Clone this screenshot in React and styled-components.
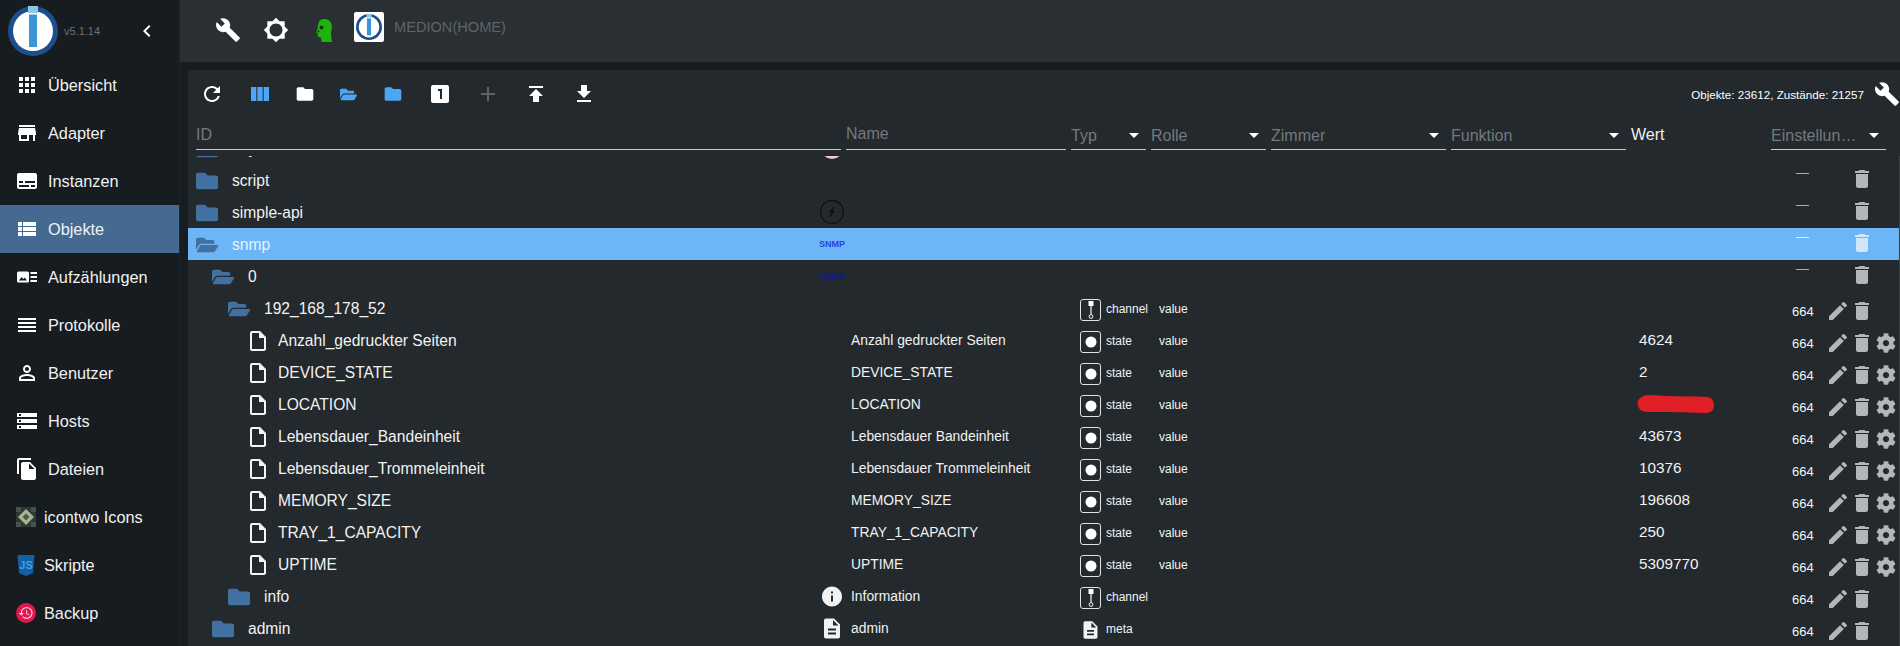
import React from "react";
import styled, { createGlobalStyle } from "styled-components";
import {
  MdApps,
  MdStore,
  MdSubtitles,
  MdViewList,
  MdReorder,
  MdPermIdentity,
  MdStorage,
  MdFileCopy,
  MdChevronLeft,
  MdBuild,
  MdBrightness5,
  MdRefresh,
  MdViewColumn,
  MdFolder,
  MdLooksOne,
  MdAdd,
  MdPublish,
  MdGetApp,
  MdEdit,
  MdDelete,
  MdInfo,
  MdDescription,
  MdOutlineInsertDriveFile,
  MdRestore,
} from "react-icons/md";
import { FaFolder, FaFolderOpen, FaCog } from "react-icons/fa";

const BLUE = "#4da6f5";
const FOLDER = "#42709f";

const GlobalStyle = createGlobalStyle`
  html, body {
    margin: 0;
    padding: 0;
    background: #161c1f;
  }
  * {
    box-sizing: border-box;
  }
`;

const Page = styled.div`
  display: flex;
  width: 1900px;
  height: 646px;
  overflow: hidden;
  font-family: "Liberation Sans", Arial, sans-serif;
  color: #fff;
`;

/* ---------- sidebar ---------- */

const Sidebar = styled.nav`
  width: 180px;
  flex: none;
  background: #171c20;
  border-right: 1px solid #20262a;
`;

const Brand = styled.div`
  display: flex;
  align-items: center;
  height: 61px;
  padding-left: 8px;
`;

const Version = styled.span`
  margin-left: 6px;
  width: 71px;
  font-size: 11px;
  color: #6d7276;
`;

const Collapse = styled.span`
  display: flex;
  font-size: 24px;
`;

const MenuItem = styled.div`
  display: flex;
  align-items: center;
  height: 48px;
  padding-left: ${(p) => (p.$image ? 16 : 15)}px;
  gap: ${(p) => (p.$image ? 8 : 9)}px;
  font-size: 16.3px;
  color: #f1f1f1;
  background: ${(p) => (p.$active ? "#456a92" : "transparent")};
`;

const MenuIcon = styled.span`
  display: flex;
  font-size: 24px;
  color: #fff;
`;

const ImageIcon = styled.span`
  display: flex;
  width: 20px;
  height: 20px;
`;

const BackupBadge = styled.span`
  display: flex;
  align-items: center;
  justify-content: center;
  width: 20px;
  height: 20px;
  border-radius: 50%;
  background: #e2174f;
  font-size: 16px;
  color: #f6c9d6;
`;

/* ---------- top bar ---------- */

const Main = styled.main`
  flex: 1;
  display: flex;
  flex-direction: column;
  min-width: 0;
`;

const TopBar = styled.header`
  display: flex;
  align-items: center;
  height: 62px;
  flex: none;
  padding: 0 0 2px 24px;
  background: #2a2f33;
`;

const TopButton = styled.span`
  display: flex;
  justify-content: center;
  width: 48px;
  font-size: 26px;
  color: #fff;
`;

const HostLogo = styled.span`
  display: flex;
  align-items: center;
  justify-content: center;
  width: 30px;
  height: 30px;
  margin: 0 10px 6px 6px;
  border-radius: 2px;
  background: #fff;
`;

const HostName = styled.span`
  margin-bottom: 6px;
  font-size: 14.6px;
  color: #5e6468;
`;

/* ---------- object panel ---------- */

const Panel = styled.section`
  flex: 1;
  display: flex;
  flex-direction: column;
  min-height: 0;
  margin: 8px 0 0 8px;
  border-radius: 4px 0 0 0;
  background: #23292d;
`;

const Toolbar = styled.div`
  display: flex;
  align-items: center;
  height: 48px;
  flex: none;
`;

const ToolButton = styled.span`
  display: flex;
  align-items: center;
  justify-content: center;
  width: ${(p) => p.$width || 48}px;
  font-size: ${(p) => p.$size || 24}px;
  color: ${(p) => p.$color || "#fff"};
`;

const FolderTools = styled.div`
  display: flex;
  width: 132px;
`;

const Counter = styled.span`
  margin-left: auto;
  font-size: 11.65px;
`;

const ToolWrench = styled.span`
  display: flex;
  justify-content: center;
  width: 26px;
  margin-left: 10px;
  font-size: 26px;
`;

const Filters = styled.div`
  display: flex;
  height: 32px;
  flex: none;
  padding-left: 8px;
  gap: 5px;
`;

const Filter = styled.div`
  display: flex;
  align-items: center;
  justify-content: space-between;
  width: ${(p) => p.$width}px;
  padding-top: ${(p) => p.$shift || 0}px;
  border-bottom: 1px solid #c9cccd;
  font-size: 16px;
  color: #74797c;
`;

const FilterText = styled.span`
  overflow: hidden;
  white-space: nowrap;
  text-overflow: ellipsis;
`;

const FilterArrow = styled.span`
  flex: none;
  width: 0;
  height: 0;
  margin: 0 7px 0 4px;
  border-left: 5px solid transparent;
  border-right: 5px solid transparent;
  border-top: 5px solid #fff;
`;

const ValueHead = styled.div`
  width: 135px;
  padding-top: 8px;
  font-size: 16px;
  color: #eee;
`;

const List = styled.div`
  flex: 1;
  min-height: 0;
  margin-top: 6px;
  overflow: hidden;
  border-right: 1px solid #3a4044;
`;

const Rows = styled.div`
  margin-top: -24px;
`;

const Row = styled.div`
  display: grid;
  grid-template-columns: 632px 260px 79px 112px 180px 188px 153px 108px;
  align-items: center;
  height: 32px;
  background: ${(p) => (p.$selected ? "#6cb5f7" : "transparent")};
  color: ${(p) => (p.$selected ? "#e7f3fe" : "#f2f2f2")};
`;

const IdCell = styled.div`
  display: flex;
  align-items: center;
  padding-top: 2px;
  padding-left: ${(p) => 8 + p.$level * 16}px;
  font-size: 15.6px;
`;

const IdIcon = styled.span`
  display: flex;
  width: ${(p) => (p.$file ? 34 : 36)}px;
  padding-left: ${(p) => (p.$file ? 2 : 0)}px;
  font-size: ${(p) => (p.$file ? 24 : 22)}px;
  color: ${(p) => (p.$file ? "#f4f4f4" : FOLDER)};
`;

const NameCell = styled.div`
  display: flex;
  align-items: center;
  font-size: 13.85px;
`;

const NameIcon = styled.span`
  display: flex;
  align-items: center;
  justify-content: center;
  flex: none;
  width: 24px;
  height: 26px;
  margin-right: 7px;
  font-size: 27px;
`;

const SnmpMark = styled.span`
  font-size: 9px;
  font-weight: bold;
  color: ${(p) => (p.$dim ? "#0e1a9a" : "#2a41e2")};
`;

const TypeCell = styled.div`
  display: flex;
  align-items: center;
  gap: 5px;
  padding-top: 2px;
  font-size: 12px;
`;

const TypeIcon = styled.span`
  display: flex;
  align-items: center;
  justify-content: center;
  flex: none;
  width: 21px;
  height: 22px;
  margin-top: 2px;
  border: ${(p) => (p.$plain ? "none" : "1.5px solid #dfe1e2")};
  border-radius: 3px;
  font-size: 24px;
`;

const RoleCell = styled.div`
  padding-top: 2px;
  font-size: 12px;
`;

const ValueCell = styled.div`
  font-size: 15.3px;
`;

const Scribble = styled.svg`
  display: block;
  margin-left: -2px;
`;

const RightsCell = styled.div`
  display: flex;
  align-items: center;
  padding-top: ${(p) => (p.$dash ? 0 : 6)}px;
  padding-bottom: ${(p) => (p.$dash ? 2 : 0)}px;
`;

const Rights = styled.span`
  width: 34px;
  padding-bottom: ${(p) => (p.$dash ? 12 : 0)}px;
  font-size: 13px;
  color: #f4f4f4;
`;

const Dash = styled.span`
  display: block;
  width: 13px;
  height: 1px;
  margin-left: 4px;
  background: ${(p) => (p.$selected ? "#d8ecfd" : "#a9adaf")};
`;

const Action = styled.span`
  display: flex;
  justify-content: center;
  width: 24px;
  font-size: ${(p) => p.$size || 24}px;
  color: ${(p) => (p.$selected ? "#cfe7fc" : "#b4b6b7")};
`;

/* ---------- drawn icons ---------- */

function IoLogo({ size }) {
  return (
    <svg width={size} height={size} viewBox="0 0 50 50">
      <circle cx="25" cy="25" r="25" fill="#1d4f8c" />
      <circle cx="25" cy="25" r="20" fill="#fff" />
      <rect x="20" y="0" width="10" height="7" fill="#8fc6e8" />
      <rect x="20" y="7" width="10" height="1.5" fill="#fff" />
      <rect x="21" y="8.5" width="8" height="32.5" fill="#3b96d6" />
    </svg>
  );
}

function MaskIcon() {
  return (
    <svg width="18" height="25" viewBox="0 0 18 25">
      <path
        d="M8 1C12.5 0.4 16.5 3 16.8 8c.2 3.4-1 5.6-.8 8.4.1 2.6 1 5.2 1 7.6H6.6c-.3-1.6-.3-3.4-.6-4.2-1.4-.2-2.7-.2-3-1.2-.2-1-.3-2.4-.6-3.4-.6-.2-1.2-.6-1.1-1.2.3-1.2 1.1-2.2 1.3-3.6C2.900 6 3.800 1.600 8 1z"
        fill="#1fb30f"
      />
      <circle cx="6.500" cy="9.500" r="2" fill="#123a12" />
      <circle cx="3.500" cy="13.500" r="1" fill="#123a12" />
    </svg>
  );
}

function EnumIcon() {
  return (
    <svg width="24" height="24" viewBox="0 0 24 24" fill="#fff">
      <rect x="2" y="6.500" width="12" height="11" rx="1.500" />
      <path d="M4 15.500l2.500-3.500 1.800 2 1.500-1.500 2.200 3z" fill="#171c20" />
      <rect x="15.500" y="7" width="6.500" height="2" />
      <rect x="15.500" y="11" width="6.500" height="2" />
      <rect x="15.500" y="15" width="6.500" height="2" />
    </svg>
  );
}

function IconTwoIcon() {
  return (
    <svg width="20" height="20" viewBox="0 0 20 20">
      <rect width="20" height="20" fill="#2e3833" />
      <path d="M0 0h5v5H0zM15 0h5v5h-5zM0 15h5v5H0zM15 15h5v5h-5z" fill="#46534c" />
      <path d="M10 2l8 8-8 8-8-8z" fill="#aab38f" />
      <path d="M10 6.500l3.500 3.500-3.500 3.500L6.500 10z" fill="#4d5a4a" />
    </svg>
  );
}

function ScriptIcon() {
  return (
    <svg width="20" height="21" viewBox="0 0 20 21">
      <path d="M1.500 0h17L17 18l-7 3-7-3z" fill="#155fa5" />
      <text
        x="10"
        y="14"
        fontSize="11"
        fontWeight="bold"
        textAnchor="middle"
        fill="#3fa0e8"
        fontFamily="Liberation Sans, sans-serif"
      >
        JS
      </text>
    </svg>
  );
}

function SayitIcon() {
  return (
    <svg width="26" height="26" viewBox="0 0 26 26">
      <path d="M2 19q11 5 22 0q-5 6-11 6t-11-6z" fill="#e8c9d8" />
    </svg>
  );
}

function BoltIcon() {
  return (
    <svg width="26" height="26" viewBox="0 0 26 26" fill="none">
      <circle cx="13" cy="13" r="12.300" stroke="#0b0d0e" strokeWidth="1.200" />
      <path d="M15.500 8l-4 4.500h3l-4 5.500" stroke="#0b0d0e" strokeWidth="1.400" />
    </svg>
  );
}

function ChannelGlyph() {
  return (
    <svg width="12" height="20" viewBox="0 0 12 20" fill="#fff">
      <rect x="3.500" y="1" width="5" height="5" />
      <rect x="5.400" y="6" width="1.200" height="8" />
      <circle cx="6" cy="16.500" r="1.900" fill="none" stroke="#fff" strokeWidth="1" />
    </svg>
  );
}

function StateGlyph() {
  return (
    <svg width="12" height="12" viewBox="0 0 12 12">
      <circle cx="6" cy="6" r="5.500" fill="#fff" />
    </svg>
  );
}

function RedactedBlob() {
  return (
    <Scribble width="77" height="20" viewBox="0 0 77 20">
      <path
        d="M3 4C8 0 14 1 22 1.500 40 3 60 2 70 3c6 1 7 5 7 9 0 5-4 7.500-11 7-16-1-36-.5-52-1-6 0-11-1-12-4C0 10 0 7 3 4z"
        fill="#e01f26"
      />
    </Scribble>
  );
}

/* ---------- data ---------- */

const MENU = [
  { label: "Übersicht", icon: <MdApps /> },
  { label: "Adapter", icon: <MdStore /> },
  { label: "Instanzen", icon: <MdSubtitles /> },
  { label: "Objekte", icon: <MdViewList />, active: true },
  { label: "Aufzählungen", icon: <EnumIcon /> },
  { label: "Protokolle", icon: <MdReorder /> },
  { label: "Benutzer", icon: <MdPermIdentity /> },
  { label: "Hosts", icon: <MdStorage /> },
  { label: "Dateien", icon: <MdFileCopy /> },
  { label: "icontwo Icons", image: <IconTwoIcon /> },
  { label: "Skripte", image: <ScriptIcon /> },
  {
    label: "Backup",
    image: (
      <BackupBadge>
        <MdRestore />
      </BackupBadge>
    ),
  },
];

const STATES = [
  ["Anzahl_gedruckter Seiten", "Anzahl gedruckter Seiten", "4624"],
  ["DEVICE_STATE", "DEVICE_STATE", "2"],
  ["LOCATION", "LOCATION", null],
  ["Lebensdauer_Bandeinheit", "Lebensdauer Bandeinheit", "43673"],
  ["Lebensdauer_Trommeleinheit", "Lebensdauer Trommeleinheit", "10376"],
  ["MEMORY_SIZE", "MEMORY_SIZE", "196608"],
  ["TRAY_1_CAPACITY", "TRAY_1_CAPACITY", "250"],
  ["UPTIME", "UPTIME", "5309770"],
];

const ROWS = [
  { id: "sayit", level: 0, folder: "closed", mark: <SayitIcon />, dash: true },
  { id: "script", level: 0, folder: "closed", dash: true },
  { id: "simple-api", level: 0, folder: "closed", mark: <BoltIcon />, dash: true },
  {
    id: "snmp",
    level: 0,
    folder: "open",
    mark: <SnmpMark>SNMP</SnmpMark>,
    dash: true,
    selected: true,
  },
  {
    id: "0",
    level: 1,
    folder: "open",
    mark: <SnmpMark $dim>SNMP</SnmpMark>,
    dash: true,
  },
  { id: "192_168_178_52", level: 2, folder: "open", type: "channel", role: "value" },
  ...STATES.map(([id, name, value]) => ({
    id,
    name,
    value,
    level: 3,
    type: "state",
    role: "value",
    gear: true,
    redacted: value === null,
  })),
  {
    id: "info",
    level: 2,
    folder: "closed",
    mark: <MdInfo />,
    name: "Information",
    type: "channel",
  },
  {
    id: "admin",
    level: 1,
    folder: "closed",
    mark: <MdDescription />,
    name: "admin",
    type: "meta",
  },
];

const FILTERS = [
  { label: "Typ", width: 75 },
  { label: "Rolle", width: 115 },
  { label: "Zimmer", width: 175 },
  { label: "Funktion", width: 175 },
];

function TypeMark({ type }) {
  if (type === "meta") {
    return (
      <TypeIcon $plain>
        <MdDescription />
      </TypeIcon>
    );
  }
  return <TypeIcon>{type === "channel" ? <ChannelGlyph /> : <StateGlyph />}</TypeIcon>;
}

function ObjectRow({ row }) {
  const { id, level, folder, mark, name, type, role, value, redacted, gear, dash, selected } = row;
  return (
    <Row $selected={selected}>
      <IdCell $level={level}>
        <IdIcon $file={!folder}>
          {!folder && <MdOutlineInsertDriveFile />}
          {folder === "closed" && <FaFolder />}
          {folder === "open" && <FaFolderOpen />}
        </IdIcon>
        {id}
      </IdCell>
      <NameCell>
        <NameIcon>{mark}</NameIcon>
        {name}
      </NameCell>
      <TypeCell>
        {type && <TypeMark type={type} />}
        {type}
      </TypeCell>
      <RoleCell>{role}</RoleCell>
      <div />
      <div />
      <ValueCell>{redacted ? <RedactedBlob /> : value}</ValueCell>
      <RightsCell $dash={dash}>
        <Rights $dash={dash}>{dash ? <Dash $selected={selected} /> : "664"}</Rights>
        <Action $selected={selected}>{!dash && <MdEdit />}</Action>
        <Action $selected={selected}>
          <MdDelete />
        </Action>
        {gear && (
          <Action $size={20}>
            <FaCog />
          </Action>
        )}
      </RightsCell>
    </Row>
  );
}

export default function App() {
  return (
    <Page>
      <GlobalStyle />
      <Sidebar>
        <Brand>
          <IoLogo size={50} />
          <Version>v5.1.14</Version>
          <Collapse>
            <MdChevronLeft />
          </Collapse>
        </Brand>
        {MENU.map((item) => (
          <MenuItem key={item.label} $active={item.active} $image={!!item.image}>
            {item.image ? <ImageIcon>{item.image}</ImageIcon> : <MenuIcon>{item.icon}</MenuIcon>}
            {item.label}
          </MenuItem>
        ))}
      </Sidebar>
      <Main>
        <TopBar>
          <TopButton>
            <MdBuild />
          </TopButton>
          <TopButton>
            <MdBrightness5 />
          </TopButton>
          <TopButton>
            <MaskIcon />
          </TopButton>
          <HostLogo>
            <IoLogo size={26} />
          </HostLogo>
          <HostName>MEDION(HOME)</HostName>
        </TopBar>
        <Panel>
          <Toolbar>
            <ToolButton>
              <MdRefresh />
            </ToolButton>
            <ToolButton $color={BLUE}>
              <MdViewColumn />
            </ToolButton>
            <FolderTools>
              <ToolButton $width={41} $size={20}>
                <MdFolder />
              </ToolButton>
              <ToolButton $width={47} $size={17} $color={BLUE}>
                <FaFolderOpen />
              </ToolButton>
              <ToolButton $width={41} $size={20} $color={BLUE}>
                <MdFolder />
              </ToolButton>
            </FolderTools>
            <ToolButton>
              <MdLooksOne />
            </ToolButton>
            <ToolButton $color="#5e6468">
              <MdAdd />
            </ToolButton>
            <ToolButton>
              <MdPublish />
            </ToolButton>
            <ToolButton>
              <MdGetApp />
            </ToolButton>
            <Counter>Objekte: 23612, Zustände: 21257</Counter>
            <ToolWrench>
              <MdBuild />
            </ToolWrench>
          </Toolbar>
          <Filters>
            <Filter $width={645} $shift={2}>
              <FilterText>ID</FilterText>
            </Filter>
            <Filter $width={220}>
              <FilterText>Name</FilterText>
            </Filter>
            {FILTERS.map((f) => (
              <Filter key={f.label} $width={f.width} $shift={4}>
                <FilterText>{f.label}</FilterText>
                <FilterArrow />
              </Filter>
            ))}
            <ValueHead>Wert</ValueHead>
            <Filter $width={115} $shift={4}>
              <FilterText>Einstellungen</FilterText>
              <FilterArrow />
            </Filter>
          </Filters>
          <List>
            <Rows>
              {ROWS.map((row) => (
                <ObjectRow key={row.id} row={row} />
              ))}
            </Rows>
          </List>
        </Panel>
      </Main>
    </Page>
  );
}
